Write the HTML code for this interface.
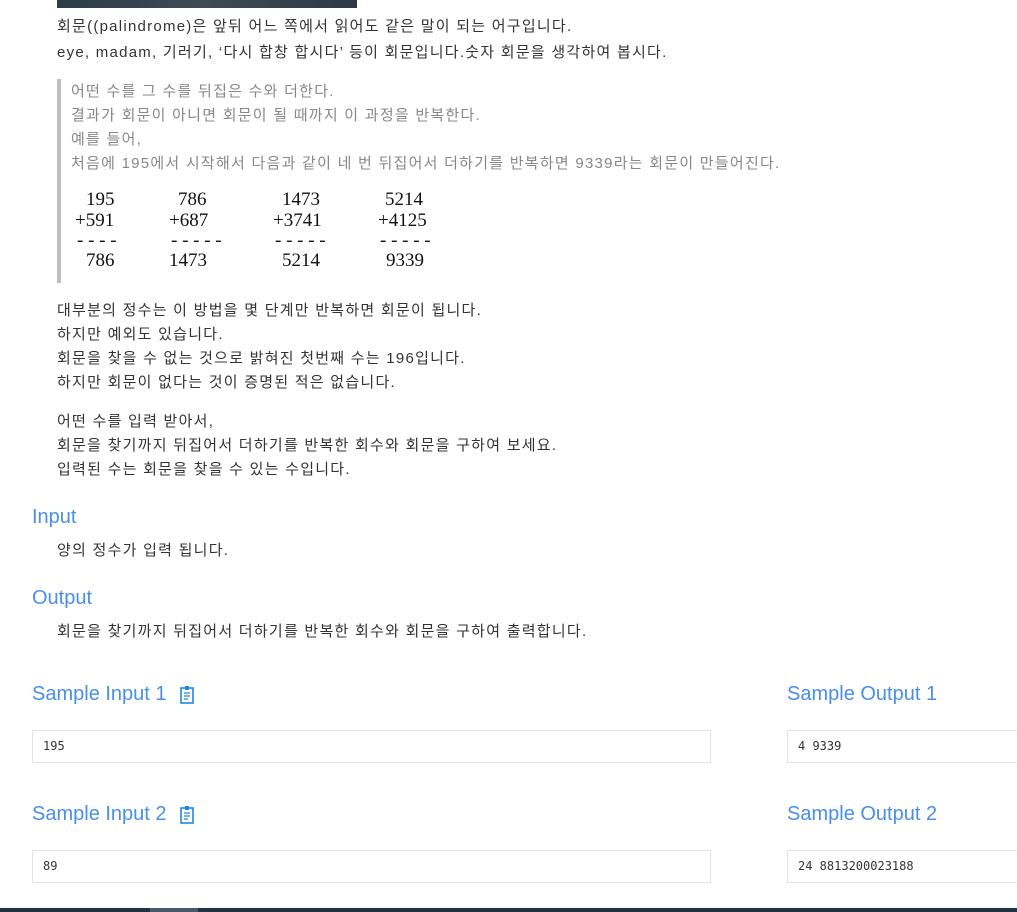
<!DOCTYPE html>
<html><head><meta charset="utf-8"><style>
body{margin:0;width:1017px;height:912px;overflow:hidden;background:#fff;position:relative;font-family:"Liberation Sans","Noto Sans CJK KR",sans-serif;font-size:15px;color:#333}
.a{position:absolute;white-space:nowrap}
.k{letter-spacing:1.25px}
.q{color:#888}
.n{font-family:"Liberation Serif","DejaVu Serif",serif;font-size:19px;color:#111}
.h{color:#4a8fe7;font-size:20px}
.box{position:absolute;height:33px;border:1px solid #e3e3e3;box-sizing:border-box;font-family:"DejaVu Sans Mono","Liberation Mono",monospace;font-size:12px;color:#333;line-height:31px;padding-left:10px}
</style></head><body>
<div class="a" style="left:57px;top:0;width:300px;height:8px;background:linear-gradient(90deg,#2d3a48,#3e4b55,#2c3844)"></div>
<div class="a k" style="left:57px;top:15px">회문((palindrome)은 앞뒤 어느 쪽에서 읽어도 같은 말이 되는 어구입니다.</div>
<div class="a k" style="left:57px;top:41px">eye, madam, 기러기, ‘다시 합창 합시다’ 등이 회문입니다.숫자 회문을 생각하여 봅시다.</div>
<div class="a" style="left:57px;top:79px;width:4px;height:204px;background:#bdbdc3"></div>
<div class="a q k" style="left:71px;top:80px">어떤 수를 그 수를 뒤집은 수와 더한다.</div>
<div class="a q k" style="left:71px;top:104px">결과가 회문이 아니면 회문이 될 때까지 이 과정을 반복한다.</div>
<div class="a q k" style="left:71px;top:128px">예를 들어,</div>
<div class="a q k" style="left:71px;top:152px">처음에 195에서 시작해서 다음과 같이 네 번 뒤집어서 더하기를 반복하면 9339라는 회문이 만들어진다.</div>
<div class="a n" style="left:86px;top:189px">195</div><div class="a n" style="left:75px;top:210px">+591</div><div class="a n" style="left:77px;top:230px">- - - -</div><div class="a n" style="left:86px;top:250px">786</div>
<div class="a n" style="left:178px;top:189px">786</div><div class="a n" style="left:169px;top:210px">+687</div><div class="a n" style="left:171px;top:230px">- - - - -</div><div class="a n" style="left:169px;top:250px">1473</div>
<div class="a n" style="left:282px;top:189px">1473</div><div class="a n" style="left:273px;top:210px">+3741</div><div class="a n" style="left:275px;top:230px">- - - - -</div><div class="a n" style="left:282px;top:250px">5214</div>
<div class="a n" style="left:385px;top:189px">5214</div><div class="a n" style="left:378px;top:210px">+4125</div><div class="a n" style="left:380px;top:230px">- - - - -</div><div class="a n" style="left:386px;top:250px">9339</div>
<div class="a k" style="left:57px;top:299px">대부분의 정수는 이 방법을 몇 단계만 반복하면 회문이 됩니다.</div>
<div class="a k" style="left:57px;top:323px">하지만 예외도 있습니다.</div>
<div class="a k" style="left:57px;top:347px">회문을 찾을 수 없는 것으로 밝혀진 첫번째 수는 196입니다.</div>
<div class="a k" style="left:57px;top:371px">하지만 회문이 없다는 것이 증명된 적은 없습니다.</div>
<div class="a k" style="left:57px;top:410px">어떤 수를 입력 받아서,</div>
<div class="a k" style="left:57px;top:434px">회문을 찾기까지 뒤집어서 더하기를 반복한 회수와 회문을 구하여 보세요.</div>
<div class="a k" style="left:57px;top:458px">입력된 수는 회문을 찾을 수 있는 수입니다.</div>
<div class="a h" style="left:32px;top:506px">Input</div>
<div class="a k" style="left:57px;top:539px">양의 정수가 입력 됩니다.</div>
<div class="a h" style="left:32px;top:587px">Output</div>
<div class="a k" style="left:57px;top:620px">회문을 찾기까지 뒤집어서 더하기를 반복한 회수와 회문을 구하여 출력합니다.</div>
<div class="a h" style="left:32px;top:683px">Sample Input 1</div>
<svg class="a" style="left:180px;top:685px" width="14" height="19" viewBox="0 0 14 19"><rect x="1" y="3" width="12" height="15" fill="none" stroke="#1e88e5" stroke-width="1.6"/><rect x="5" y="1" width="4" height="4" fill="#1e88e5"/><path d="M4 8h6M4 11h6M4 14h4" stroke="#1e88e5" stroke-width="1.3"/></svg>
<div class="a h" style="left:787px;top:683px">Sample Output 1</div>
<div class="box" style="left:32px;top:730px;width:679px">195</div>
<div class="box" style="left:787px;top:730px;width:240px">4 9339</div>
<div class="a h" style="left:32px;top:803px">Sample Input 2</div>
<svg class="a" style="left:180px;top:805px" width="14" height="19" viewBox="0 0 14 19"><rect x="1" y="3" width="12" height="15" fill="none" stroke="#1e88e5" stroke-width="1.6"/><rect x="5" y="1" width="4" height="4" fill="#1e88e5"/><path d="M4 8h6M4 11h6M4 14h4" stroke="#1e88e5" stroke-width="1.3"/></svg>
<div class="a h" style="left:787px;top:803px">Sample Output 2</div>
<div class="box" style="left:32px;top:850px;width:679px">89</div>
<div class="box" style="left:787px;top:850px;width:240px">24 8813200023188</div>
<div class="a" style="left:0;top:908px;width:1017px;height:4px;background:#22333f"></div>
<div class="a" style="left:150px;top:908px;width:48px;height:4px;background:#4b5a66"></div>
</body></html>
